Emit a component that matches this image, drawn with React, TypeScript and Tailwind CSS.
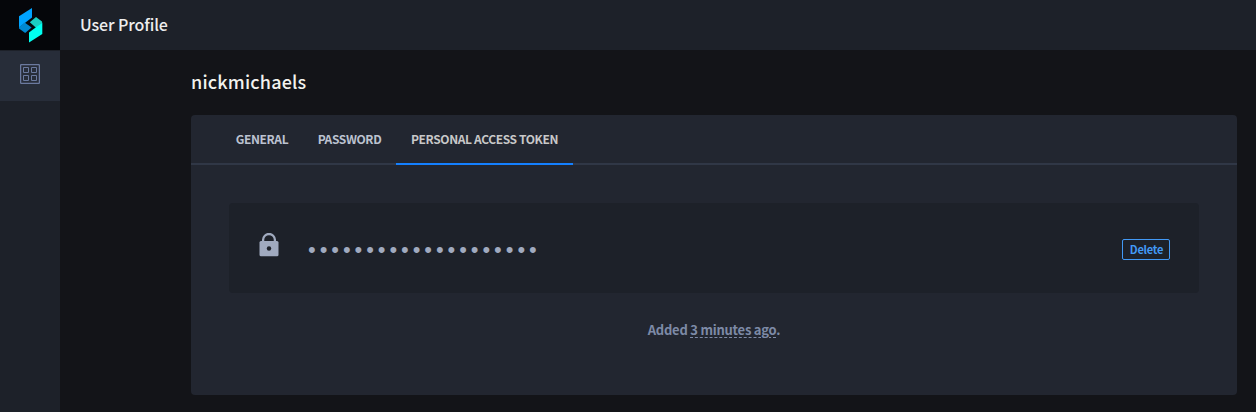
import React from "react";

const TABS = ["GENERAL", "PASSWORD", "PERSONAL ACCESS TOKEN"];
const WIDTHS = ["w-[82px]", "w-[93px]", "w-[177px]"];

function Logo() {
  return (
    <svg width="60" height="50" viewBox="0 0 60 50">
      <path d="M19 16.2 32 8v9.4L19 27.4z" fill="#00a3ff" />
      <path d="M19 27.2 24.6 22.6 31.6 27.6 25.2 33 19 28.6z" fill="#0087d1" />
      <path d="M29.8 22.3 36 17l6 4.6v1.2L36.3 28z" fill="#1bcdc2" />
      <path d="M29 32.6 42.3 22.6V34L29 42.4z" fill="#00fff0" />
    </svg>
  );
}

function GridIcon() {
  return (
    <svg width="20" height="20" viewBox="0 0 20 20" fill="none" stroke="#6b7a9f">
      <rect x=".6" y=".6" width="18.8" height="18.8" rx="1" strokeWidth="1.3" />
      <path d="M3.5 3.5h5v5h-5zM11.5 3.5h5v5h-5zM3.5 11.5h5v5h-5zM11.5 11.5h5v5h-5z" />
    </svg>
  );
}

function LockIcon() {
  return (
    <svg width="20" height="24" viewBox="0 0 20 24">
      <path d="M4.1 9V6.8a5.9 5.8 0 0 1 11.8 0V9" fill="none" stroke="#a0aabf" strokeWidth="2.3" />
      <rect x=".5" y="8" width="19" height="15.3" rx="1.5" fill="#a0aabf" />
      <circle cx="10" cy="15.5" r="2.2" fill="#1d2129" />
    </svg>
  );
}

export default function App() {
  return (
    <div className="flex h-[412px] w-[1256px] overflow-hidden bg-[#131418] font-['Noto_Sans_CJK_SC','Noto_Sans',sans-serif]">
      <aside className="flex w-[60px] shrink-0 flex-col bg-[#1d2129]">
        <div className="h-[50px] bg-[#05060a]"><Logo /></div>
        <div className="flex h-[51px] justify-center border-t border-[#1d2129] bg-[#272d39] pt-[13px]"><GridIcon /></div>
      </aside>
      <div className="flex grow flex-col">
        <header className="flex h-[50px] items-center bg-[#1d2129] pb-[2px] pl-5">
          <span className="text-[16px] font-medium leading-6 tracking-[-0.1px] text-[#eeeeee]">User Profile</span>
        </header>
        <main className="flex flex-col pl-[131px]">
          <h1 className="mt-[16px] h-[49px] text-[18px] font-medium leading-[30px] tracking-[0.18px] text-[#f2f2ee]"><span>nickmichaels</span></h1>
          <section className="h-[280px] w-[1046px] rounded bg-[#222630]">
            <nav className="flex h-[50px] border-b-2 border-[#303746] pl-[30px]">
              {TABS.map((t, i) => (
                <div key={t} className={`${WIDTHS[i]} flex h-[50px] justify-center whitespace-nowrap border-b-2 pt-[14px] text-[12px] font-bold leading-[20px] tracking-[-0.38px] ${i === 2 ? "border-[#1480ff] text-[#c8c8c8]" : "border-transparent text-[#bcc2d0]"}`}>
                  <span>{t}</span>
                </div>
              ))}
            </nav>
            <div className="mx-[38px] mt-[38px] flex h-[90px] items-center rounded-sm bg-[#1d2129] pr-[29px] pl-[30px]">
              <div className="-mt-1.5"><LockIcon /></div>
              <span className="ml-[29px] flex grow pt-[3px] text-[#a0aabf]">
                <span className="font-['Liberation_Sans'] text-[22px] leading-6 tracking-[3.93px]">{"•".repeat(20)}</span>
              </span>
              <button className="mt-[2px] flex h-[21px] w-12 items-center justify-center rounded-xs border border-[#4299f5] text-[11px] font-bold leading-[18px] tracking-[-0.25px] text-[#4299f5]">
                <span className="pl-px">Delete</span>
              </button>
            </div>
            <p className="mt-[27px] flex justify-center text-[13px] font-bold leading-[20px] tracking-[-0.23px] text-[#7d8aa6]">
              <span>Added <span className="underline decoration-dashed decoration-1 underline-offset-2">3 minutes ago</span>.</span>
            </p>
          </section>
        </main>
      </div>
    </div>
  );
}
